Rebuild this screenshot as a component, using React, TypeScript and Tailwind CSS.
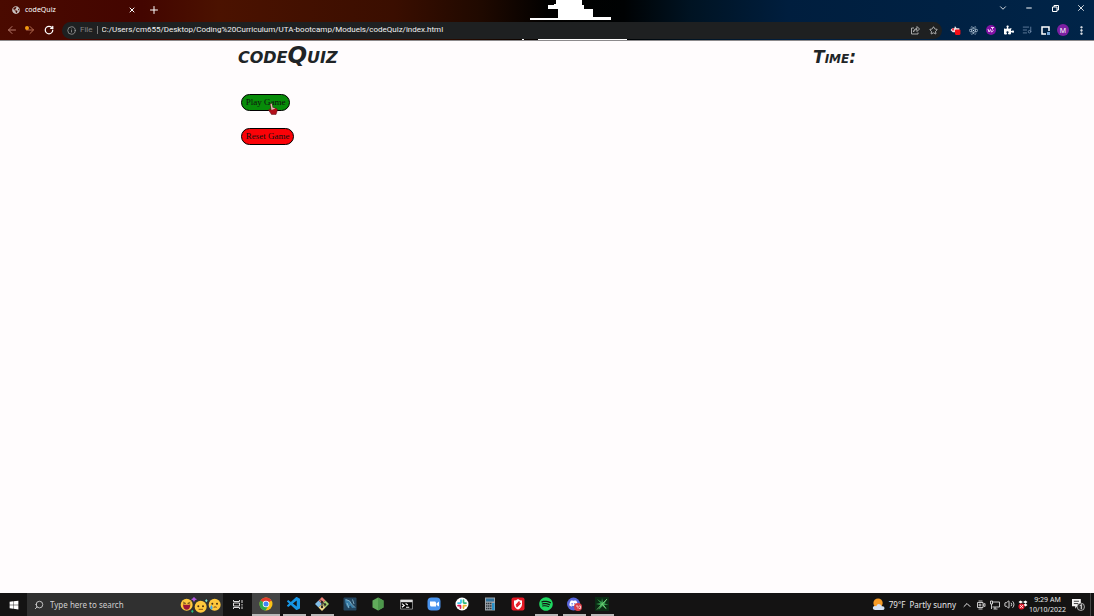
import type { ReactNode } from "react";
import { FaReact, FaPuzzlePiece, FaSpotify, FaDiscord, FaGlobeAmericas, FaWindows } from "react-icons/fa";
import { VscVscode } from "react-icons/vsc";
import {
  ArrowLeft, ArrowRight, RotateCw, X, Plus, Minus, ChevronDown, ChevronUp, Info, Star, ListMusic,
  EllipsisVertical, Search, Volume2,
} from "lucide-react";

function Wallpaper() {
  return (
    <svg className="absolute inset-0 h-full w-full" viewBox="0 0 1094 40" preserveAspectRatio="none" aria-hidden="true">
      <defs>
        <linearGradient id="sky">
          <stop offset="0" stopColor="#4a0a00" />
          <stop offset=".13" stopColor="#430500" />
          <stop offset=".2" stopColor="#4b1200" />
          <stop offset=".36" stopColor="#3a0e00" />
          <stop offset=".44" stopColor="#1f0900" />
          <stop offset=".5" stopColor="#020100" />
          <stop offset=".57" stopColor="#000203" />
          <stop offset=".63" stopColor="#001322" />
          <stop offset=".72" stopColor="#001e3e" />
          <stop offset="1" stopColor="#002448" />
        </linearGradient>
      </defs>
      <path fill="url(#sky)" d="M0 0H1094V40H0Z" />
      <path
        fill="#fff"
        d="M556 0H582V5H584V9H593V17H611V20H530V18H558V9H548V5H554V4H556ZM548 38H555V39H627V40H538V39H548ZM522 39H524V40H522Z"
      />
    </svg>
  );
}

const iconButton = "flex h-4 shrink-0 items-center justify-center";

function TabStrip() {
  return (
    <div className="relative flex h-5 items-center text-white">
      <div className="ml-3 flex w-[124px] items-center gap-1">
        <FaGlobeAmericas className="size-2 text-[#c9c2c0]" />
        <span className="ml-px flex-1 text-[7px] leading-3">codeQuiz</span>
        <button aria-label="Close tab" className={iconButton}><X className="size-2" strokeWidth={3} /></button>
      </div>
      <button aria-label="New tab" className={`${iconButton} ml-3`}><Plus className="size-3" strokeWidth={2} /></button>
      <div className="ml-auto flex pb-1">
        <button aria-label="Search tabs" className={`${iconButton} w-[26px]`}><ChevronDown className="size-[10px]" /></button>
        <button aria-label="Minimize" className={`${iconButton} w-[26px]`}><Minus className="size-2" strokeWidth={3} /></button>
        <button aria-label="Restore" className={`${iconButton} w-[26px]`}>
          <svg viewBox="0 0 14 14" className="size-[7px]" fill="none" stroke="currentColor" strokeWidth="2">
            <path d="M1 4H10V13H1ZM4 4V1H13V10H10" />
          </svg>
        </button>
        <button aria-label="Close" className={`${iconButton} w-[26px]`}><X className="size-[10px]" strokeWidth={2} /></button>
      </div>
    </div>
  );
}

function Toolbar() {
  const slot = `${iconButton} w-[18px]`;
  return (
    <div className="relative flex h-5 items-center pr-1 text-white">
      <button aria-label="Back" className={`${iconButton} ml-[3px] w-[18px] text-[#b77a6d]`}><ArrowLeft className="size-3" /></button>
      <button aria-label="Forward" className={`${iconButton} relative w-[18px] text-[#b36b50]`}>
        <ArrowRight className="size-3" />
        <span className="absolute left-1 top-1 size-1 rounded-full bg-[#f39a10]" />
      </button>
      <button aria-label="Reload" className={`${iconButton} ml-px w-[18px]`}><RotateCw className="size-[10px]" strokeWidth={3} /></button>
      <div className="ml-1 flex h-[17px] min-w-0 flex-1 items-center rounded-full bg-[#1e2021] pl-[5px] font-[Roboto,sans-serif] text-[8px]">
        <Info className="size-[9px] shrink-0 text-[#a6a6a6]" />
        <label htmlFor="address" className="mx-1 text-[#858585]">File</label>
        <span className="h-2 w-px shrink-0 bg-[#777]" />
        <input
          id="address"
          className="ml-1 min-w-0 flex-1 bg-transparent text-[#f2f2f2] outline-none"
          defaultValue="C:/Users/cm655/Desktop/Coding%20Curriculum/UTA-bootcamp/Moduels/codeQuiz/index.html"
        />
        <button aria-label="Share" className={`${slot} text-[#aaa]`}>
          <svg viewBox="0 0 18 18" className="size-[9px]" fill="none" stroke="currentColor" strokeWidth="2">
            <path d="M6 4H1V16H14V13M5 12C6 8 9 7 12 7V11L17 6L12 1V5C8 5 5 8 5 12Z" />
          </svg>
        </button>
        <button aria-label="Bookmark" className={`${slot} text-[#ddd]`}><Star className="size-[9px]" strokeWidth={2} /></button>
      </div>
      <div className="ml-1 flex">
        <button aria-label="Video extension" className={slot}>
          <svg viewBox="0 0 20 20" className="size-[11px]">
            <path fill="#f6e6e8" d="M1 9L4 6L8 6L9 2L12 6H17V13H5Z" />
            <path fill="#e6192d" d="M4 6H7V10H4Z" />
            <rect x="9" y="8" width="10" height="10" rx="2" fill="#f40d17" />
          </svg>
        </button>
        <button aria-label="React tools" className={slot}><FaReact className="size-[9px] text-[#d7e8f5]" /></button>
        <button aria-label="Accessibility tools" className={slot}>
          <svg viewBox="0 0 20 20" className="size-[10px]">
            <circle cx="10" cy="10" r="10" fill="#8212a5" />
            <path d="M4 8L6 14L9 9L11 14L15 11M13 4V9M10 5H16" fill="none" stroke="#f1d5f7" strokeWidth="2" />
          </svg>
        </button>
        <button aria-label="Extensions" className={slot}><FaPuzzlePiece className="size-[10px]" /></button>
        <button aria-label="Media controls" className={`${slot} text-[#6c88a6]`}><ListMusic className="size-[10px]" /></button>
        <button aria-label="Side panel" className={slot}>
          <svg viewBox="0 0 18 18" className="size-[9px]">
            <path d="M2 2H16V16H2Z" fill="none" stroke="#fff" strokeWidth="3" />
            <path d="M10 10H18V18H10Z" fill="#002448" />
            <path d="M12 12H18V18H12Z" fill="#76a9dc" />
          </svg>
        </button>
        <button aria-label="Profile" className={slot}>
          <span className="flex size-3 items-center justify-center rounded-full bg-[#7b1fa2] text-[7px] leading-none">M</span>
        </button>
        <button aria-label="Menu" className={slot}><EllipsisVertical className="size-[11px]" strokeWidth={3} /></button>
      </div>
    </div>
  );
}

function Page() {
  const pill = "rounded-full border border-black px-1 text-[9px] leading-[15px] text-[#101010]";
  return (
    <main className="flex-1 border-t border-[#8c8a8c] bg-[#fffcfd] text-[#202426]">
      <header className="flex items-start justify-between pl-[21.75%] pr-[21.75%] font-['DejaVu_Sans',sans-serif] font-bold italic [font-variant:small-caps]">
        <h1 className="text-[23px] leading-[28px]">codeQuiz</h1>
        <p className="text-[17px] leading-8">Time:</p>
      </header>
      <div className="ml-[22%] mt-[21px] flex flex-col items-start gap-[17px] font-['Liberation_Serif',serif]">
        <button className={`${pill} relative bg-[#078c09]`}>
          Play Game
          <svg viewBox="0 0 20 24" className="absolute left-[26px] top-2 h-3 w-[10px]" aria-hidden="true">
            <path
              d="M5 2Q7 0 8 3L9 9L17 11Q20 12 18 17L16 23H7L1 14Q2 11 6 14Z"
              fill="#b3101b" stroke="#551018" strokeWidth="1"
            />
            <path d="M5 2Q7 0 8 3L9 9L15 11L7 14Z" fill="#e4bcbc" />
          </svg>
        </button>
        <button className={`${pill} bg-[#fb0207]`}>Reset Game</button>
      </div>
    </main>
  );
}

function SearchFaces() {
  return (
    <svg viewBox="0 0 126 48" className="h-4 w-[42px] shrink-0" aria-hidden="true">
      <circle cx="20" cy="23" r="18" fill="#ffc83d" />
      <path d="M9 23H31Q30 38 20 38Q10 38 9 23Z" fill="#9b1738" />
      <path d="M9 15L17 19L9 21M31 15L23 19L31 21" fill="none" stroke="#4b3010" strokeWidth="2" />
      <circle cx="62" cy="29" r="18" fill="#ffc83d" />
      <circle cx="55" cy="28" r="3" fill="#4b3010" /><circle cx="69" cy="28" r="3" fill="#4b3010" />
      <path d="M56 37H69" fill="none" stroke="#8b5510" strokeWidth="3" />
      <circle cx="104" cy="23" r="18" fill="#ffc83d" />
      <circle cx="97" cy="20" r="3" fill="#4b3010" /><circle cx="111" cy="20" r="3" fill="#4b3010" />
      <path d="M101 31Q105 28 110 31" fill="none" stroke="#7b4310" strokeWidth="3" />
      <path d="M94 24Q101 34 95 38Q87 36 94 24Z" fill="#3ba8ec" />
      <path d="M42 -1L45 4L51 7L45 10L42 15L39 10L33 7L39 4Z" fill="#b35be4" />
      <path d="M37 38L41 43L37 48L33 43Z" fill="#25ba7b" />
      <path d="M79 6L83 11L79 16L75 11Z" fill="#7adacb" />
    </svg>
  );
}

function TaskItem({ name, running, active, children }: { name: string; running?: boolean; active?: boolean; children: ReactNode }) {
  return (
    <button
      aria-label={name}
      className={`flex h-full w-7 shrink-0 flex-col items-center pt-[3px] ${active ? "bg-[#444]" : ""}`}
    >
      <span className="flex h-4 items-center">{children}</span>
      {running && <span className={`mt-auto h-0.5 bg-[#b8b8b8] ${active ? "w-7" : "w-[23px]"}`} />}
    </button>
  );
}

function Taskbar() {
  const art = "size-[14px]";
  return (
    <footer className="flex h-[23px] shrink-0 items-stretch bg-[#141313] text-[8px] text-[#e8e8e8]">
      <button aria-label="Start" className="flex w-[27px] shrink-0 items-center justify-center"><FaWindows className="size-[10px] text-white" /></button>
      <div className="flex w-[196px] shrink-0 items-center bg-[#303030] pl-[7px]">
        <Search className="size-[10px] shrink-0 -scale-x-100 text-[#ddd]" />
        <input aria-label="Type here to search" placeholder="Type here to search" className="ml-1.5 min-w-0 flex-1 bg-transparent outline-none placeholder:text-[#cfcfcf]" />
        <SearchFaces />
        <span className="w-px" />
      </div>
      <button aria-label="Task view" className="flex w-[29px] shrink-0 items-center justify-center">
        <svg viewBox="0 0 20 18" className="h-[9px] w-[10px]" fill="none" stroke="#ddd" strokeWidth="2">
          <path d="M1 0V3H13V0M1 18V15H13V18M1 6H13V12H1ZM18 0V6M18 8V11M18 13V18" />
        </svg>
      </button>
      <TaskItem name="Chrome" running active>
        <svg viewBox="0 0 28 28" className={art}>
          <circle cx="14" cy="14" r="13" fill="#fbc116" />
          <path d="M14 14L3 7A13 13 0 0 1 25 7Z" fill="#e33b2e" />
          <path d="M14 14L3 7A13 13 0 0 0 13 27L19 17Z" fill="#2da94f" />
          <circle cx="14" cy="14" r="6.5" fill="#fff" /><circle cx="14" cy="14" r="5" fill="#4285f4" />
        </svg>
      </TaskItem>
      <TaskItem name="Visual Studio Code" running><VscVscode className="size-4 text-[#1696e5]" /></TaskItem>
      <TaskItem name="Git Bash" running>
        <svg viewBox="0 0 28 28" className={art}>
          <path d="M14 0L21 7L14 14L7 7Z" fill="#ee8277" /><path d="M7 7L14 14L7 21L0 14Z" fill="#83bfe9" />
          <path d="M21 7L28 14L21 21L14 14Z" fill="#a4ce70" /><path d="M14 14L21 21L14 28L7 21Z" fill="#f3dc8c" />
          <path d="M10 5L14 9V21M14 10L20 15" fill="none" stroke="#342b2b" strokeWidth="2" />
          <circle cx="14" cy="10" r="2.5" fill="#302828" /><circle cx="14" cy="20" r="2.5" fill="#302828" /><circle cx="20" cy="15" r="2.5" fill="#302828" />
        </svg>
      </TaskItem>
      <TaskItem name="MySQL Workbench">
        <svg viewBox="0 0 28 28" className={art}>
          <rect x="1" y="1" width="26" height="26" rx="2" fill="#23455f" />
          <path d="M4 6Q13 4 16 13Q19 19 24 21L18 22L15 17Q11 19 11 23Q5 17 4 6Z" fill="#397faa" />
          <path d="M5 5Q15 6 17 14L24 21M8 12L12 22M19 5L22 14" fill="none" stroke="#9bc5da" strokeWidth="1.5" />
        </svg>
      </TaskItem>
      <TaskItem name="Node.js">
        <svg viewBox="0 0 28 28" className={art}>
          <path d="M14 1L25 7V21L14 27L3 21V7Z" fill="#61ab5b" />
          <path d="M14 1L25 7V21L14 27Z" fill="#4d974b" />
        </svg>
      </TaskItem>
      <TaskItem name="Command Prompt">
        <svg viewBox="0 0 28 24" className="h-[11px] w-[13px]">
          <path d="M1 2H27V22H1Z" fill="#050505" stroke="#bbb" strokeWidth="1.5" /><path d="M1 2H27V7H1Z" fill="#ddd" />
          <path d="M4 10L9 14L4 18M12 10L17 13M13 18H20" fill="none" stroke="#fff" strokeWidth="2.5" />
        </svg>
      </TaskItem>
      <TaskItem name="Zoom">
        <svg viewBox="0 0 28 28" className={art}>
          <rect x="1" y="1" width="26" height="26" rx="8" fill="#4a94ee" />
          <path d="M6 9H16Q18 9 18 12V19H9Q6 19 6 16ZM19 13L24 9V19L19 16Z" fill="#fff" />
        </svg>
      </TaskItem>
      <TaskItem name="Slack">
        <svg viewBox="0 0 28 28" className={art}>
          <circle cx="14" cy="14" r="13" fill="#fff" />
          <g strokeWidth="3.5" strokeLinecap="round">
            <path d="M12 6V11M6 12H11" stroke="#36c5f0" /><path d="M17 6V11M18 12H22" stroke="#2eb67d" />
            <path d="M17 17V22M18 17H22" stroke="#ecb22e" /><path d="M11 18V22M6 17H11" stroke="#e01e5a" />
          </g>
        </svg>
      </TaskItem>
      <TaskItem name="Calculator">
        <svg viewBox="0 0 24 28" className="h-[14px] w-3">
          <path d="M2 1H22V27H2Z" fill="#9da6ad" /><path d="M4 3H20V9H4Z" fill="#2f719c" />
          <path d="M4 13H15M4 18H15M4 23H15" stroke="#303940" strokeWidth="3" strokeDasharray="3 1" />
          <path d="M16 12H21V26H16Z" fill="#2690c9" />
        </svg>
      </TaskItem>
      <TaskItem name="Security">
        <svg viewBox="0 0 28 28" className={art}>
          <rect x="1" y="1" width="26" height="26" rx="4" fill="#e71925" />
          <path d="M14 4Q18 7 22 7V15Q21 22 14 25Q7 22 6 15V7Q10 7 14 4Z" fill="#fff" />
          <path d="M10 17L17 9M11 20L19 12" stroke="#e71925" strokeWidth="3" />
        </svg>
      </TaskItem>
      <TaskItem name="Spotify" running><FaSpotify className="size-[14px] text-[#1ed760]" /></TaskItem>
      <TaskItem name="Discord" running>
        <svg viewBox="0 0 30 28" className="h-[14px] w-[15px]">
          <circle cx="13" cy="14" r="13" fill="#5966dc" />
          <FaDiscord x="4" y="4" size="18" color="#fff" />
          <circle cx="22" cy="20" r="8" fill="#d93f49" />
          <path d="M18 18H22V23M24 18H27V23H24" stroke="#f6c5c8" strokeWidth="2" fill="none" />
        </svg>
      </TaskItem>
      <TaskItem name="Game" running>
        <svg viewBox="0 0 28 28" className={art}>
          <path d="M0 0H28V28H0Z" fill="#0b2c14" />
          <path d="M14 2L16 11L25 3L19 13L27 15L18 16L23 25L15 18L7 26L11 16L2 14L11 12L4 4L13 10Z" fill="#39a653" />
          <path d="M4 25L24 4M14 13L22 23" stroke="#8ad786" strokeWidth="1.5" />
        </svg>
      </TaskItem>
      <div className="ml-auto flex shrink-0 items-center">
        <button className="flex items-center gap-1">
          <svg viewBox="0 0 28 28" className="size-[13px]" aria-hidden="true">
            <circle cx="13" cy="11" r="10" fill="#f79b26" />
            <path d="M7 26Q1 26 2 20Q4 16 9 18Q12 11 18 14Q20 15 21 18Q27 17 27 22Q27 26 22 26Z" fill="#d5e1f2" />
          </svg>
          <span>79°F</span><span>Partly sunny</span>
        </button>
        <button aria-label="Show hidden icons" className="ml-1 flex w-[14px] justify-center"><ChevronUp className="size-3" /></button>
        <button aria-label="Meet now" className="flex w-[14px] justify-center">
          <svg viewBox="0 0 20 20" className="size-[10px]" fill="none" stroke="#ddd" strokeWidth="1.8"><path d="M5 2H13M5 18H13M3 5H14V15H3ZM14 9L18 7V13L14 11" /><circle cx="8" cy="10" r="2" /></svg>
        </button>
        <button aria-label="Network" className="flex w-[14px] justify-center">
          <svg viewBox="0 0 20 20" className="size-[10px]" fill="none" stroke="#ddd" strokeWidth="1.8"><path d="M5 4H19V14H5M10 14V18M7 18H15M1 2H5V8H1ZM3 8V18" /></svg>
        </button>
        <button aria-label="Volume" className="flex w-[14px] justify-center"><Volume2 className="size-[11px]" /></button>
        <button aria-label="Status" className="flex w-[13px] justify-center">
          <svg viewBox="0 0 20 20" className="size-[10px]">
            <path d="M5 1L10 4L5 7L1 4ZM15 1L19 4L15 7L10 4ZM15 7L19 10L15 13L10 10Z" fill="#fff" />
            <circle cx="7" cy="13" r="6" fill="#df1d2e" /><path d="M4 10L10 16M10 10L4 16" stroke="#fff" strokeWidth="1.5" />
          </svg>
        </button>
        <div className="flex w-[37px] flex-col items-center text-[7px] leading-[10px]"><span>9:29 AM</span><span>10/10/2022</span></div>
        <button aria-label="Notifications" className="ml-1 flex w-4 justify-center">
          <svg viewBox="0 0 28 28" className="size-[13px]">
            <path d="M0 2H19V18H11L7 23V18H0Z" fill="#f5f5f5" /><path d="M4 7H15M4 12H13" stroke="#333" strokeWidth="2" />
            <circle cx="19" cy="19" r="8" fill="#292929" stroke="#ddd" strokeWidth="1.5" />
            <path d="M17 17L20 14V24" fill="none" stroke="#fff" strokeWidth="2" />
          </svg>
        </button>
        <span className="ml-1 mr-[3px] h-[23px] w-px bg-[#454545]" />
      </div>
    </footer>
  );
}

export default function App() {
  return (
    <div className="flex min-h-screen flex-col font-['Noto_Sans',sans-serif]">
      <div className="relative shrink-0"><Wallpaper /><TabStrip /><Toolbar /></div>
      <Page />
      <Taskbar />
    </div>
  );
}
